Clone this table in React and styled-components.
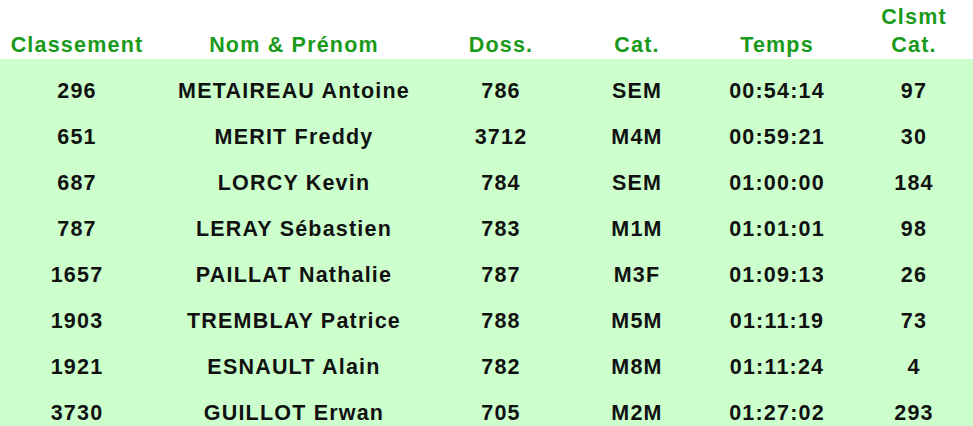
import React from "react";
import styled, { createGlobalStyle } from "styled-components";

const Global = createGlobalStyle`
    body {
        margin: 0;
        background: #ffffff;
        overflow: hidden;
        font-family: "Liberation Sans", Arial, sans-serif;
    }
`;

const Table = styled.div`
    width: 980px;
    font-weight: bold;
    font-size: 21.5px;
    letter-spacing: 1.2px;
`;
const Grid = styled.div`
    display: grid;
    grid-template-columns: 154px 280px 134px 138px 142px 132px;
`;
const HeaderRow = styled(Grid)`
    height: 59px;
    align-items: end;
    color: #1a9a1a;
`;
const HeaderCell = styled.div`
    text-align: center;
    line-height: 28px;
    font-size: 21.5px;
`;
const Body = styled.div`
    background: #ccffcc;
    padding-top: 9px;
`;
const Row = styled(Grid)`
    height: 46px;
    align-items: center;
    color: #111111;
`;
const Cell = styled.div`
    text-align: center;
    line-height: 46px;
`;

const headers = ["Classement", "Nom & Prénom", "Doss.", "Cat.", "Temps", ["Clsmt", "Cat."]];

const rows = [
    ["296", "METAIREAU Antoine", "786", "SEM", "00:54:14", "97"],
    ["651", "MERIT Freddy", "3712", "M4M", "00:59:21", "30"],
    ["687", "LORCY Kevin", "784", "SEM", "01:00:00", "184"],
    ["787", "LERAY Sébastien", "783", "M1M", "01:01:01", "98"],
    ["1657", "PAILLAT Nathalie", "787", "M3F", "01:09:13", "26"],
    ["1903", "TREMBLAY Patrice", "788", "M5M", "01:11:19", "73"],
    ["1921", "ESNAULT Alain", "782", "M8M", "01:11:24", "4"],
    ["3730", "GUILLOT Erwan", "705", "M2M", "01:27:02", "293"],
];

const App = () => {
    return (
        <>
            <Global />
            <Table>
                <HeaderRow>
                    {headers.map((h, i) => (
                        <HeaderCell key={i}>
                            {Array.isArray(h) ? h.map((l) => <div key={l}>{l}</div>) : h}
                        </HeaderCell>
                    ))}
                </HeaderRow>
                <Body>
                    {rows.map((r) => (
                        <Row key={r[0]}>
                            {r.map((c, i) => (
                                <Cell key={i}>{c}</Cell>
                            ))}
                        </Row>
                    ))}
                </Body>
            </Table>
        </>
    );
};

export default App;
